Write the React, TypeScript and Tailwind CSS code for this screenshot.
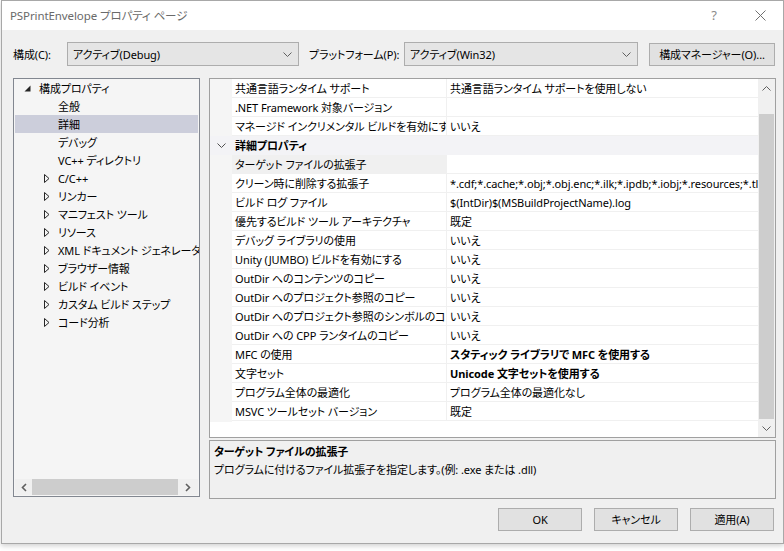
import React from "react";

// 詳細ページのプロパティ一覧
type Row = {
  name: string;
  value?: string;
  bold?: boolean;
  category?: boolean;
  selected?: boolean;
};

const rows: Row[] = [
  { name: "共通言語ランタイム サポート", value: "共通言語ランタイム サポートを使用しない" },
  { name: ".NET Framework 対象バージョン", value: "" },
  { name: "マネージド インクリメンタル ビルドを有効にする", value: "いいえ" },
  { name: "詳細プロパティ", category: true },
  { name: "ターゲット ファイルの拡張子", value: "", selected: true },
  {
    name: "クリーン時に削除する拡張子",
    value:
      "*.cdf;*.cache;*.obj;*.obj.enc;*.ilk;*.ipdb;*.iobj;*.resources;*.tlb;*.tli;*.tlh;*.tmp;*.rsp;*.pgc;*.pgd",
  },
  { name: "ビルド ログ ファイル", value: "$(IntDir)$(MSBuildProjectName).log" },
  { name: "優先するビルド ツール アーキテクチャ", value: "既定" },
  { name: "デバッグ ライブラリの使用", value: "いいえ" },
  { name: "Unity (JUMBO) ビルドを有効にする", value: "いいえ" },
  { name: "OutDir へのコンテンツのコピー", value: "いいえ" },
  { name: "OutDir へのプロジェクト参照のコピー", value: "いいえ" },
  { name: "OutDir へのプロジェクト参照のシンボルのコピー", value: "いいえ" },
  { name: "OutDir への CPP ランタイムのコピー", value: "いいえ" },
  { name: "MFC の使用", value: "スタティック ライブラリで MFC を使用する", bold: true },
  { name: "文字セット", value: "Unicode 文字セットを使用する", bold: true },
  { name: "プログラム全体の最適化", value: "プログラム全体の最適化なし" },
  { name: "MSVC ツールセット バージョン", value: "既定" },
];

type TreeItem = { label: string; level: 0 | 1; arrow?: "open" | "closed"; selected?: boolean };

const tree: TreeItem[] = [
  { label: "構成プロパティ", level: 0, arrow: "open" },
  { label: "全般", level: 1 },
  { label: "詳細", level: 1, selected: true },
  { label: "デバッグ", level: 1 },
  { label: "VC++ ディレクトリ", level: 1 },
  { label: "C/C++", level: 1, arrow: "closed" },
  { label: "リンカー", level: 1, arrow: "closed" },
  { label: "マニフェスト ツール", level: 1, arrow: "closed" },
  { label: "リソース", level: 1, arrow: "closed" },
  { label: "XML ドキュメント ジェネレーター", level: 1, arrow: "closed" },
  { label: "ブラウザー情報", level: 1, arrow: "closed" },
  { label: "ビルド イベント", level: 1, arrow: "closed" },
  { label: "カスタム ビルド ステップ", level: 1, arrow: "closed" },
  { label: "コード分析", level: 1, arrow: "closed" },
];

function Chevron({ className = "" }: { className?: string }) {
  return (
    <svg width="9" height="5" viewBox="0 0 9 5" className={className}>
      <path d="M0.5 0.5 L4.5 4.5 L8.5 0.5" fill="none" stroke="currentColor" strokeWidth="1" />
    </svg>
  );
}

function Combo({ text, width }: { text: string; width: string }) {
  return (
    <div
      className={`${width} h-[24px] shrink-0 flex items-center justify-between bg-[#e5e5e5] border border-[#adadad] pl-[5px] pr-[6px]`}
    >
      <span className="whitespace-nowrap">{text}</span>
      <Chevron className="text-[#606060]" />
    </div>
  );
}

function Button({ children, width = "w-[84px]" }: { children: React.ReactNode; width?: string }) {
  return (
    <div
      className={`${width} h-[23px] shrink-0 flex items-center justify-center bg-[#e1e1e1] border border-[#adadad] whitespace-nowrap`}
    >
      {children}
    </div>
  );
}

function TreeView() {
  return (
    <div className="w-[187px] h-[419px] shrink-0 border border-[#828790] bg-[#f5f5f5] flex flex-col">
      <div className="flex-1 overflow-hidden">
        {tree.map((item) => (
          <div
            key={item.label}
            className={`h-[18px] mx-px flex items-center whitespace-nowrap ${
              item.selected ? "bg-[#cccedb]" : ""
            }`}
          >
            {item.level === 0 ? (
              <>
                <span className="w-[23px] shrink-0 flex justify-end pr-[7px]">
                  <svg width="7" height="7" viewBox="0 0 7 7">
                    <path d="M6.5 0.5 L6.5 6.5 L0.5 6.5 Z" fill="#262626" />
                  </svg>
                </span>
                <span className="pl-[1px]">{item.label}</span>
              </>
            ) : (
              <>
                <span className="w-[43px] shrink-0 flex justify-end pr-[8px]">
                  {item.arrow === "closed" && (
                    <svg width="6" height="9" viewBox="0 0 6 9">
                      <path d="M0.5 0.5 L5 4.5 L0.5 8.5 Z" fill="none" stroke="#262626" strokeWidth="1" />
                    </svg>
                  )}
                </span>
                <span>{item.label}</span>
              </>
            )}
          </div>
        ))}
      </div>
      {/* 横スクロールバー */}
      <div className="h-[16px] mx-px mb-px flex items-center bg-[#f0f0f0]">
        <div className="w-[17px] flex justify-center text-[#606060]">
          <svg width="6" height="9" viewBox="0 0 6 9">
            <path d="M5 1 L1.5 4.5 L5 8" fill="none" stroke="currentColor" strokeWidth="1.6" />
          </svg>
        </div>
        <div className="flex-1 h-full bg-[#cdcdcd]" />
        <div className="w-[20px] flex justify-center text-[#606060]">
          <svg width="6" height="9" viewBox="0 0 6 9">
            <path d="M1 1 L4.5 4.5 L1 8" fill="none" stroke="currentColor" strokeWidth="1.6" />
          </svg>
        </div>
      </div>
    </div>
  );
}

function PropertyGrid() {
  return (
    <div className="w-[567px] h-[360px] border border-[#a0a0a0] bg-white flex">
      <div className="flex-1 min-w-0 overflow-hidden">
        {rows.map((r) =>
          r.category ? (
            <div key={r.name} className="h-[19px] flex items-center bg-[#f3f3f6]">
              <div className="w-[22px] flex justify-center text-[#505050]">
                <Chevron />
              </div>
              <span className="pl-[3px] font-bold">{r.name}</span>
            </div>
          ) : (
            <div key={r.name} className="h-[19px] flex">
              <div className="w-[22px] shrink-0 bg-[#f5f5f5]" />
              <div
                className={`w-[215px] shrink-0 border-r border-b border-[#f0f0f0] pl-[3px] flex items-center overflow-hidden whitespace-nowrap ${
                  r.selected ? "bg-[#f0f0f0]" : ""
                }`}
              >
                {r.name}
              </div>
              <div
                className={`flex-1 min-w-0 border-b border-[#f0f0f0] pl-[3px] flex items-center overflow-hidden whitespace-nowrap ${
                  r.bold ? "font-bold" : ""
                }`}
              >
                {r.value}
              </div>
            </div>
          )
        )}
        <div className="h-px flex">
          <div className="w-[22px] bg-[#f5f5f5]" />
        </div>
      </div>
      {/* 縦スクロールバー */}
      <div className="w-[17px] shrink-0 bg-[#f0f0f0] flex flex-col">
        <div className="h-[18px] flex items-center justify-center text-[#606060]">
          <Chevron className="rotate-180" />
        </div>
        <div className="h-[17px]" />
        <div className="h-[305px] mx-px bg-[#cdcdcd]" />
        <div className="flex-1 flex items-center justify-center text-[#606060]">
          <Chevron />
        </div>
      </div>
    </div>
  );
}

export default function App() {
  return (
    <div className="w-[784px] h-[551px] bg-white overflow-hidden text-[11px] leading-none text-black font-['Noto_Sans','Noto_Sans_CJK_JP',sans-serif] [font-feature-settings:'palt'] tracking-[-0.1px]">
      <div className="ml-px w-[783px] h-[544px] border border-[#a8a8a8] bg-[#f0f0f0] flex flex-col shadow-[0_2px_5px_rgba(0,0,0,0.18)]">
        {/* タイトルバー */}
        <div className="h-[29px] shrink-0 bg-white flex items-center justify-between pl-[8px]">
          <span className="text-[#6a6a6a] text-[11.5px] pt-[1px]">PSPrintEnvelope プロパティ ページ</span>
          <div className="flex items-center text-[#8a8a8a]">
            <span className="w-[46px] text-center text-[13px]">?</span>
            <span className="w-[46px] flex justify-center">
              <svg width="11" height="11" viewBox="0 0 11 11">
                <path d="M0.5 0.5 L10.5 10.5 M10.5 0.5 L0.5 10.5" stroke="#707070" strokeWidth="1" />
              </svg>
            </span>
          </div>
        </div>

        {/* 構成 / プラットフォーム */}
        <div className="mt-[12px] pl-[11px] flex items-center h-[24px]">
          <span className="w-[54px] shrink-0 whitespace-nowrap">構成(C):</span>
          <Combo text="アクティブ(Debug)" width="w-[232px]" />
          <span className="ml-[10px] w-[95px] shrink-0 whitespace-nowrap">プラットフォーム(P):</span>
          <Combo text="アクティブ(Win32)" width="w-[234px]" />
          <div className="ml-[11px]">
            <Button width="w-[126px]">構成マネージャー(O)...</Button>
          </div>
        </div>

        {/* 本体 */}
        <div className="mt-[12px] pl-[11px] flex items-start gap-[9px]">
          <TreeView />
          <div className="flex flex-col gap-[2px]">
            <PropertyGrid />
            <div className="w-[567px] h-[59px] border border-[#a0a0a0] bg-[#f0f0f0] pl-[4px] pt-[1px]">
              <div className="h-[18px] flex items-center font-bold">ターゲット ファイルの拡張子</div>
              <div className="h-[18px] flex items-center">
                プログラムに付けるファイル拡張子を指定します。(例: .exe または .dll)
              </div>
            </div>
          </div>
        </div>

        {/* ボタン */}
        <div className="mt-[9px] pr-[9px] flex justify-end gap-[12px]">
          <Button>OK</Button>
          <Button>キャンセル</Button>
          <Button>適用(A)</Button>
        </div>
      </div>
    </div>
  );
}
